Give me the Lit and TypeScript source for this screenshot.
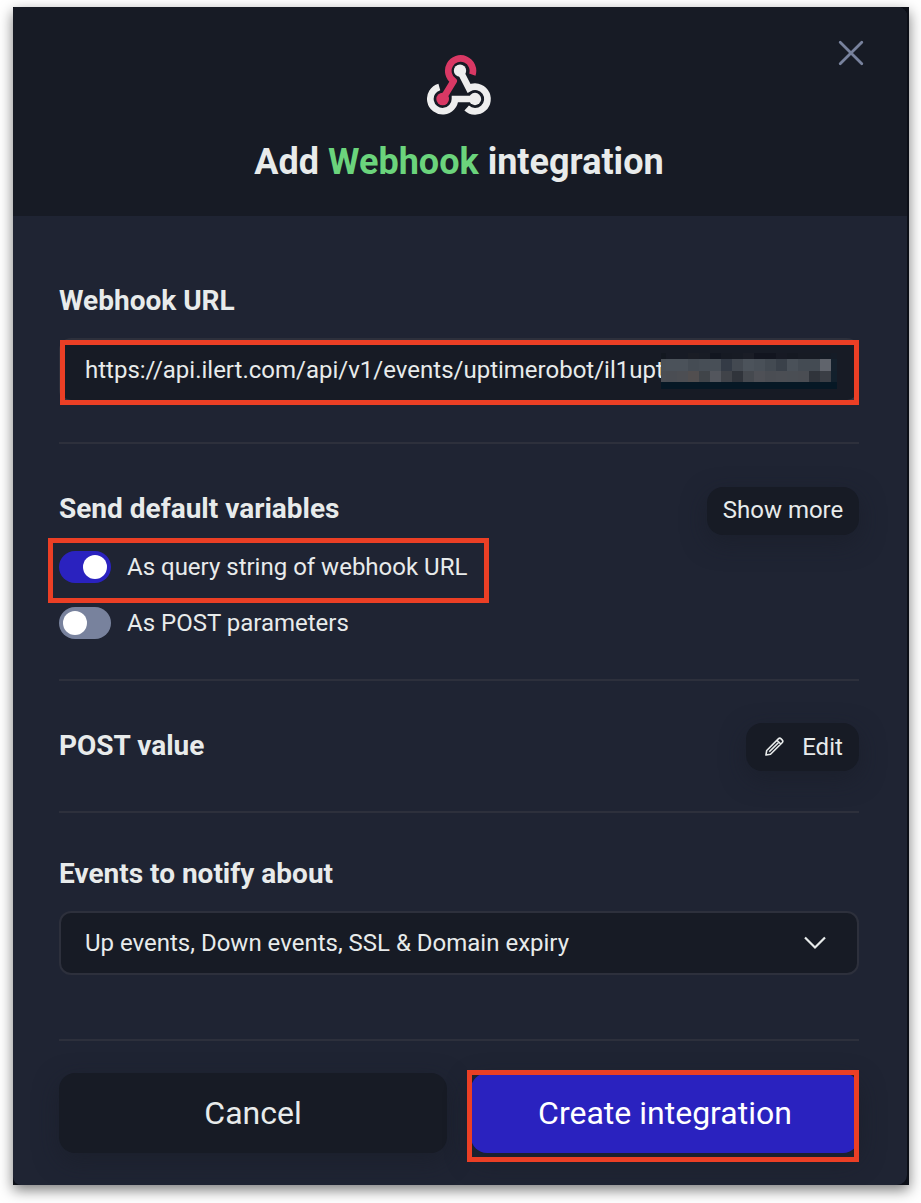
import { LitElement, html, css } from "lit";
import { customElement, property } from "lit/decorators.js";
import { classMap } from "lit/directives/class-map.js";

@customElement("toggle-switch")
class ToggleSwitch extends LitElement {
  @property({ type: Boolean }) on = false;
  static styles = css`
    :host { display: block; }
    .track { width: 52px; height: 32px; border-radius: 16px; background: #78829d; display: flex; align-items: center; padding: 0 4px; box-sizing: border-box; }
    .track.on { background: #2a22bf; justify-content: flex-end; }
    .knob { width: 24px; height: 24px; border-radius: 50%; background: #fff; }
  `;
  render() {
    return html`<div class=${classMap({ track: true, on: this.on })}><div class="knob"></div></div>`;
  }
}

const MASK_COLUMNS = [5, 11, 11, 11, 11, 11, 11, 11, 11, 11, 11, 11, 11, 11, 11, 11, 6];
const MASK_ROWS: string[][] = [
  ["#131820", "#171b25", "#171b25", "#1a1d25", "#181c25", "#121620", "#161a23", "#171b24", "#1a1d26", "#12151f", "#12151f", "#171a24", "#151922", "#171b24", "#171b24", "#151b25", "#151c27"],
  ["#4b5158", "#4b525a", "#4b525a", "#454c54", "#474e56", "#484f57", "#343b46", "#434951", "#4c535b", "#495058", "#434a52", "#3a414a", "#4a5159", "#444b53", "#444b53", "#60646c", "#14202c"],
  ["#4b4e54", "#4a4d53", "#4c4e53", "#514e4f", "#404449", "#53565d", "#404349", "#30343b", "#45494f", "#4e5056", "#4a4d53", "#4b4e54", "#4a4e54", "#4a4d53", "#30343b", "#3a3e45", "#12202c"],
  Array(17).fill("#061825"),
];

@customElement("app-root")
class AppRoot extends LitElement {
  static styles = css`
    :host { display: block; box-sizing: border-box; width: 921px; height: 1203px; padding: 7px 12px 18px 13px; background: #fff; overflow: hidden; font-family: Roboto, sans-serif; color: #e8ebeb; }
    * { box-sizing: border-box; }
    svg { display: block; }
    .frame { height: 1178px; padding-right: 2px; background: #0c0f17; box-shadow: 0 5px 13px rgba(0, 0, 0, 0.52); }
    .dialog { height: 1178px; display: flex; flex-direction: column; background: #1f2433; border-radius: 3px 9px 10px 8px; overflow: hidden; }
    .header { position: relative; height: 209px; flex: none; display: flex; flex-direction: column; align-items: center; padding: 48px 2px 0 0; background: #171b25; }
    .close { position: absolute; top: 32px; right: 42px; }
    h1 { margin: 25px 0 0; font-size: 36px; line-height: 42px; font-weight: 700; white-space: nowrap; }
    .accent { color: #6bd47c; }
    .body { padding: 67px 48px 0 46px; }
    h2 { margin: 0; font-size: 28px; line-height: 36px; font-weight: 700; white-space: nowrap; }
    .section { position: relative; border-bottom: 2px solid #2d303c; }
    .url { height: 161px; }
    .vars { height: 237px; padding-top: 43px; }
    .post { height: 132px; padding-top: 42px; }
    .events { height: 228px; padding-top: 43px; }
    .row { display: flex; justify-content: space-between; align-items: flex-start; height: 48px; }
    .post h2 { margin-top: 5px; }
    .vars h2 { margin-top: 4px; }
    .field { position: relative; width: 800px; height: 64px; display: flex; align-items: center; justify-content: space-between; padding: 0 31px 0 24px; border: 2px solid #2d303c; border-radius: 12px; background: #171b25; font-size: 24px; line-height: 32px; white-space: nowrap; }
    .url .field { margin-top: 19px; }
    .events .field { margin-top: 19px; }
    .mask { position: absolute; left: 600px; top: 13px; display: grid; grid-template-rows: 6px 12px 11px 7px; width: 177px; }
    .maskrow { display: flex; }
    .btn { display: flex; align-items: center; justify-content: center; background: #171b25; border-radius: 16px; box-shadow: 0 8px 24px rgba(23, 27, 37, 0.5); white-space: nowrap; }
    .small { height: 48px; font-size: 24px; line-height: 32px; }
    .more { width: 152px; padding-bottom: 3px; }
    .edit { width: 113px; gap: 18px; padding: 0 0 1px 3px; }
    .option { display: flex; align-items: center; gap: 16px; height: 32px; font-size: 24px; line-height: 32px; white-space: nowrap; }
    .first { margin-top: 16px; }
    .second { margin-top: 24px; }
    .actions { display: flex; gap: 24px; padding-top: 32px; position: relative; }
    .big { width: 388px; height: 80px; font-size: 32px; line-height: 40px; }
    .primary { background: #2a22bf; color: #fff; }
    .mark { position: absolute; border: 5px solid #eb3f25; }
    .mark-url { left: 1px; top: 57px; width: 799px; height: 65px; }
    .mark-query { left: -11px; top: 94px; width: 441px; height: 65px; }
    .mark-create { left: 408px; top: 29px; width: 392px; height: 92px; }
  `;

  render() {
    return html`
      <div class="frame"><div class="dialog">
        <div class="header">
          <svg width="65" height="61" viewBox="50 45 195 183" fill="none" stroke-width="20">
            <path stroke="#d93864" stroke-linejoin="round" d="M186 104A37 37 0 1 0 130 123L97 177" />
            <circle cx="97" cy="177" r="19" fill="#d93864" />
            <path stroke="#eeeeee" d="M149 92L176 145A37 37 0 1 1 169 204" />
            <circle cx="149" cy="92" r="18.5" fill="#eeeeee" />
            <path stroke="#eeeeee" d="M87 141A37 37 0 1 0 134 177L194 177" />
            <circle cx="194" cy="177" r="18.5" fill="#eeeeee" />
          </svg>
          <h1>Add <span class="accent">Webhook</span> integration</h1>
          <svg class="close" width="28" height="28" viewBox="0 0 28 28" fill="none" stroke="#78829d" stroke-width="2.8" stroke-linecap="round"><path d="M3.2 3.2L24.8 24.8M24.8 3.2L3.2 24.8" /></svg>
        </div>
        <div class="body">
          <div class="section url">
            <h2>Webhook URL</h2>
            <div class="field">
              <span>https://api.ilert.com/api/v1/events/uptimerobot/il1upt</span>
              <div class="mask">
                ${MASK_ROWS.map((row) => html`<div class="maskrow">${row.map((c, i) => html`<div style="width:${MASK_COLUMNS[i]}px;background:${c}"></div>`)}</div>`)}
              </div>
            </div>
            <div class="mark mark-url"></div>
          </div>
          <div class="section vars">
            <div class="row"><h2>Send default variables</h2><div class="btn small more">Show more</div></div>
            <div class="option first"><toggle-switch on></toggle-switch><span>As query string of webhook URL</span></div>
            <div class="option second"><toggle-switch></toggle-switch><span>As POST parameters</span></div>
            <div class="mark mark-query"></div>
          </div>
          <div class="section post">
            <div class="row"><h2>POST value</h2>
              <div class="btn small edit">
                <svg width="19" height="19" viewBox="0 0 20 20" fill="none" stroke="#e8ebeb" stroke-width="1.7" stroke-linejoin="round"><path d="M1 19L1.8 14.2L14 2C15 1 16 1 17 2L18 3C19 4 19 5 18 6L5.8 18.2L1 19ZM12.6 3.4L16.6 7.4M4.5 15.5L14 6" /></svg>
                <span>Edit</span>
              </div>
            </div>
          </div>
          <div class="section events">
            <h2>Events to notify about</h2>
            <div class="field"><span>Up events, Down events, SSL &amp; Domain expiry</span>
              <svg width="22" height="14" viewBox="0 0 22 14" fill="none" stroke="#e8ebeb" stroke-width="2.2"><path d="M1 1.5L11 11.5L21 1.5" /></svg>
            </div>
          </div>
          <div class="actions">
            <div class="btn big">Cancel</div>
            <div class="btn big primary">Create integration</div>
            <div class="mark mark-create"></div>
          </div>
        </div>
      </div></div>
    `;
  }
}
